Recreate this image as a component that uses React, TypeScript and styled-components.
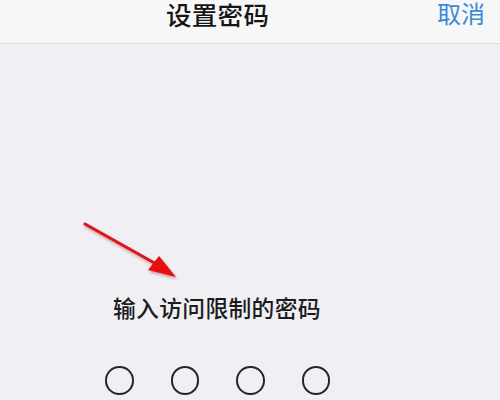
import React from "react";
import styled, { createGlobalStyle } from "styled-components";

const Global = createGlobalStyle`
  html, body { margin: 0; padding: 0; }
  body {
    width: 500px; height: 400px; overflow: hidden;
    background: #efeff4;
    font-family: "Noto Sans CJK SC", "Noto Sans", sans-serif;
  }
`;

const Screen = styled.div`
  position: relative;
  width: 500px;
  height: 400px;
  background: #efeff4;
  display: flex;
  flex-direction: column;
`;

const NavBar = styled.header`
  height: 43px;
  background: #f7f7f8;
  border-bottom: 1.5px solid #d9d9de;
  display: flex;
  align-items: flex-start;
  padding: 0 15px 0 166px;
`;

const Title = styled.div`
  font-size: 25.5px;
  line-height: 27px;
  font-weight: 500;
  color: #151515;
  letter-spacing: 0.3px;
`;

const Cancel = styled.div`
  margin-left: auto;
  font-size: 24px;
  line-height: 26px;
  color: #3b8ad8;
`;

const Body = styled.main`
  flex: 1;
  display: flex;
  flex-direction: column;
  padding: 252px 0 0 113px;
`;

const Prompt = styled.div`
  font-size: 22.8px;
  line-height: 24px;
  font-weight: 500;
  color: #1c1c1c;
  letter-spacing: 0.3px;
`;

const Dots = styled.div`
  display: flex;
  gap: 37px;
  margin: 46px 0 0 -8px;
`;

const Dot = styled.div`
  box-sizing: border-box;
  width: 28.5px;
  height: 28.5px;
  border: 2px solid #262626;
  border-radius: 50%;
`;

const Arrow = styled.svg`
  position: absolute;
  left: 0;
  top: 0;
  pointer-events: none;
  filter: drop-shadow(1px 2px 1.5px rgba(120, 0, 0, 0.35));
`;

export default function App() {
  return (
    <Screen>
      <Global />
      <NavBar>
        <Title>设置密码</Title>
        <Cancel>取消</Cancel>
      </NavBar>
      <Body>
        <Prompt>输入访问限制的密码</Prompt>
        <Dots>
          {[0, 1, 2, 3].map((i) => (
            <Dot key={i} />
          ))}
        </Dots>
      </Body>
      <Arrow width="500" height="400" viewBox="0 0 500 400">
        <line x1="85" y1="224" x2="158" y2="265" stroke="#e01414" strokeWidth="3" strokeLinecap="round" />
        <polygon points="176,277 148,270 159,256" fill="#e61010" />
      </Arrow>
    </Screen>
  );
}
